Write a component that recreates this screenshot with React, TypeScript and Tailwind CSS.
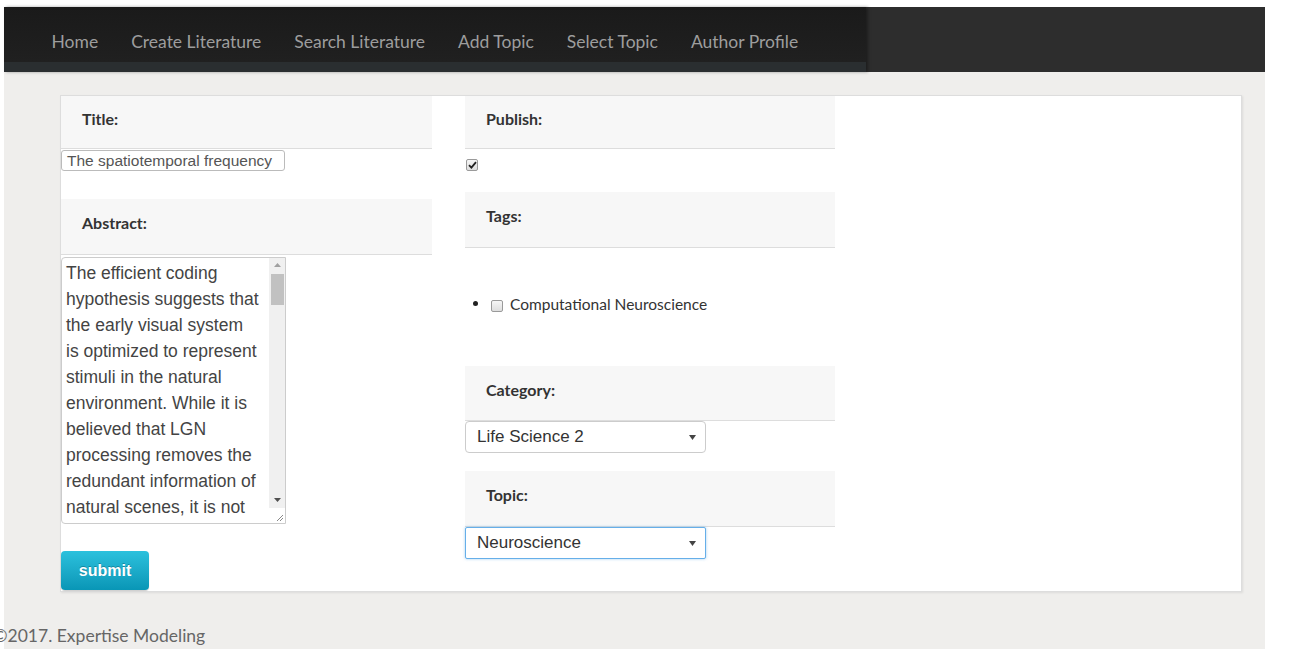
import React from 'react';

const navItems = ['Home', 'Create Literature', 'Search Literature', 'Add Topic', 'Select Topic', 'Author Profile'];

// only the lines that show in the box; the rest of the abstract is scrolled away
const abstractLines = [
  'The efficient coding',
  'hypothesis suggests that',
  'the early visual system',
  'is optimized to represent',
  'stimuli in the natural',
  'environment. While it is',
  'believed that LGN',
  'processing removes the',
  'redundant information of',
  'natural scenes, it is not',
];

const SectionHeader: React.FC<{ label: string; className?: string }> = ({ label, className }) => (
  <div
    className={`bg-[#f7f7f7] border-b border-[#dddddd] px-[21px] font-bold text-[16px] leading-[24px] text-[#333] ${className ?? ''}`}
    style={{ fontFamily: 'Lato, "Open Sans", sans-serif' }}
  >
    {label}
  </div>
);

const FakeCheckbox: React.FC<{ checked?: boolean; className?: string }> = ({ checked, className }) => (
  <span
    className={`inline-flex items-center justify-center w-[12px] h-[12px] border border-[#9a9a9a] rounded-[2px] bg-gradient-to-b from-[#f6f6f6] to-[#dedede] ${className ?? ''}`}
  >
    {checked && (
      <svg width="9" height="8" viewBox="0 0 9 8">
        <path d="M1 4.2 L3.4 6.6 L8 1.2" fill="none" stroke="#222" strokeWidth="1.8" />
      </svg>
    )}
  </span>
);

const FakeSelect: React.FC<{ value: string; focused?: boolean }> = ({ value, focused }) => (
  <div
    className={`flex items-center justify-between w-[241px] h-[32px] pl-[11px] pr-[9px] bg-white text-[17px] text-[#333] ${
      focused
        ? 'border border-[#66afe9] rounded-[2px] shadow-[0_0_3px_rgba(102,175,233,0.6)]'
        : 'border border-[#cccccc] rounded-[4px]'
    }`}
    style={{ fontFamily: '"Liberation Sans", Arial, sans-serif' }}
  >
    <span>{value}</span>
    <svg width="7" height="5" viewBox="0 0 7 5">
      <path d="M0 0 L7 0 L3.5 5 Z" fill="#444" />
    </svg>
  </div>
);

export default function App() {
  return (
    <div className="w-[1289px] min-h-[649px] bg-white pt-[7px] pl-[4px] overflow-hidden">
      <div className="w-[1261px] min-h-[642px] bg-[#efeeec]">
        {/* top navigation */}
        <header className="h-[65px] bg-[#2d2d2d]">
          <div className="w-[862px] shadow-[2px_0_3px_rgba(0,0,0,0.35)]">
            <ul
              className="h-[55px] flex pl-[31px] pt-[23px] bg-gradient-to-b from-[#1a1a1a] to-[#202020] text-[17.5px] leading-[24px] text-[#9d9d9d]"
              style={{ fontFamily: 'Lato, "Open Sans", sans-serif' }}
            >
              {navItems.map(item => (
                <li key={item} className="px-[16.5px] whitespace-nowrap">
                  {item}
                </li>
              ))}
            </ul>
            <div className="h-[10px] bg-[#2a2e30]"></div>
          </div>
        </header>

        {/* form card */}
        <main className="pt-[23px] pl-[56px]">
          <div className="w-[1182px] bg-white border border-[#dddddd] shadow-[1px_1px_2px_rgba(0,0,0,0.08)] flex gap-[33px]">
            {/* left column */}
            <div className="w-[371px] flex flex-col">
              <SectionHeader label="Title:" className="h-[53px] pt-[11px]" />
              <div
                className="mt-[1px] w-[224px] h-[21px] border border-[#bbbbbb] rounded-[3px] pl-[5px] text-[15.5px] leading-[19px] text-[#555] whitespace-nowrap overflow-hidden"
                style={{ fontFamily: '"Liberation Sans", Arial, sans-serif' }}
              >
                The spatiotemporal frequency
              </div>
              <SectionHeader label="Abstract:" className="mt-[28px] h-[56px] pt-[12px]" />
              <div className="mt-[2px] w-[225px] h-[267px] flex border border-[#cccccc] rounded-l-[4px] overflow-hidden">
                <div
                  className="flex-1 pl-[4px] pt-[2px] text-[17.5px] leading-[26px] text-[#444] overflow-hidden"
                  style={{ fontFamily: '"Liberation Sans", Arial, sans-serif' }}
                >
                  {abstractLines.map(line => (
                    <div key={line} className="whitespace-nowrap">
                      {line}
                    </div>
                  ))}
                </div>
                <div className="w-[16px] flex flex-col">
                  <div className="h-[250px] bg-[#f0f0f0] flex flex-col items-center">
                    <svg width="7" height="4" viewBox="0 0 7 4" className="mt-[5px]">
                      <path d="M0 4 L7 4 L3.5 0 Z" fill="#a0a0a0" />
                    </svg>
                    <div className="mt-[7px] w-[13px] h-[31px] bg-[#c1c1c1]"></div>
                    <div className="flex-1"></div>
                    <svg width="7" height="4" viewBox="0 0 7 4" className="mb-[6px]">
                      <path d="M0 0 L7 0 L3.5 4 Z" fill="#505050" />
                    </svg>
                  </div>
                  <div className="flex-1 bg-white flex items-end justify-end pr-[2px] pb-[2px]">
                    <svg width="7" height="7" viewBox="0 0 7 7">
                      <path d="M7 1 L1 7 M7 4 L4 7" stroke="#888" strokeWidth="1" />
                    </svg>
                  </div>
                </div>
              </div>
              <button
                className="mt-[27px] mb-[1px] w-[88px] h-[39px] rounded-[4px] bg-gradient-to-b from-[#2bc1dd] to-[#0896b6] text-white font-bold text-[16px] shadow-[0_1px_1px_rgba(0,0,0,0.2)] [text-shadow:0_-1px_0_rgba(0,0,0,0.25)]"
                style={{ fontFamily: '"Liberation Sans", Arial, sans-serif' }}
              >
                submit
              </button>
            </div>

            {/* right column */}
            <div className="w-[370px] flex flex-col">
              <SectionHeader label="Publish:" className="h-[53px] pt-[11px]" />
              <FakeCheckbox checked className="mt-[10px] ml-[1px]" />
              <SectionHeader label="Tags:" className="mt-[21px] h-[56px] pt-[12px]" />
              <ul
                className="mt-[46px] pl-[8px] text-[15.5px] leading-[20px] text-[#333]"
                style={{ fontFamily: 'Lato, "Open Sans", sans-serif' }}
              >
                <li className="flex items-center">
                  <span className="w-[5px] h-[5px] rounded-full bg-[#222] mr-[13px] mb-[2px]"></span>
                  <FakeCheckbox className="mr-[7px] mt-[4px]" />
                  <span>Computational Neuroscience</span>
                </li>
              </ul>
              <SectionHeader label="Category:" className="mt-[52px] h-[55px] pt-[12px]" />
              <div>
                <FakeSelect value="Life Science 2" />
              </div>
              <SectionHeader label="Topic:" className="mt-[18px] h-[56px] pt-[12px]" />
              <div>
                <FakeSelect value="Neuroscience" focused />
              </div>
            </div>
          </div>
        </main>

        <footer
          className="mt-[32px] ml-[-11px] text-[17.5px] leading-[24px] text-[#666] whitespace-nowrap"
          style={{ fontFamily: 'Lato, "Open Sans", sans-serif' }}
        >
          ©2017. Expertise Modeling
        </footer>
      </div>
    </div>
  );
}
